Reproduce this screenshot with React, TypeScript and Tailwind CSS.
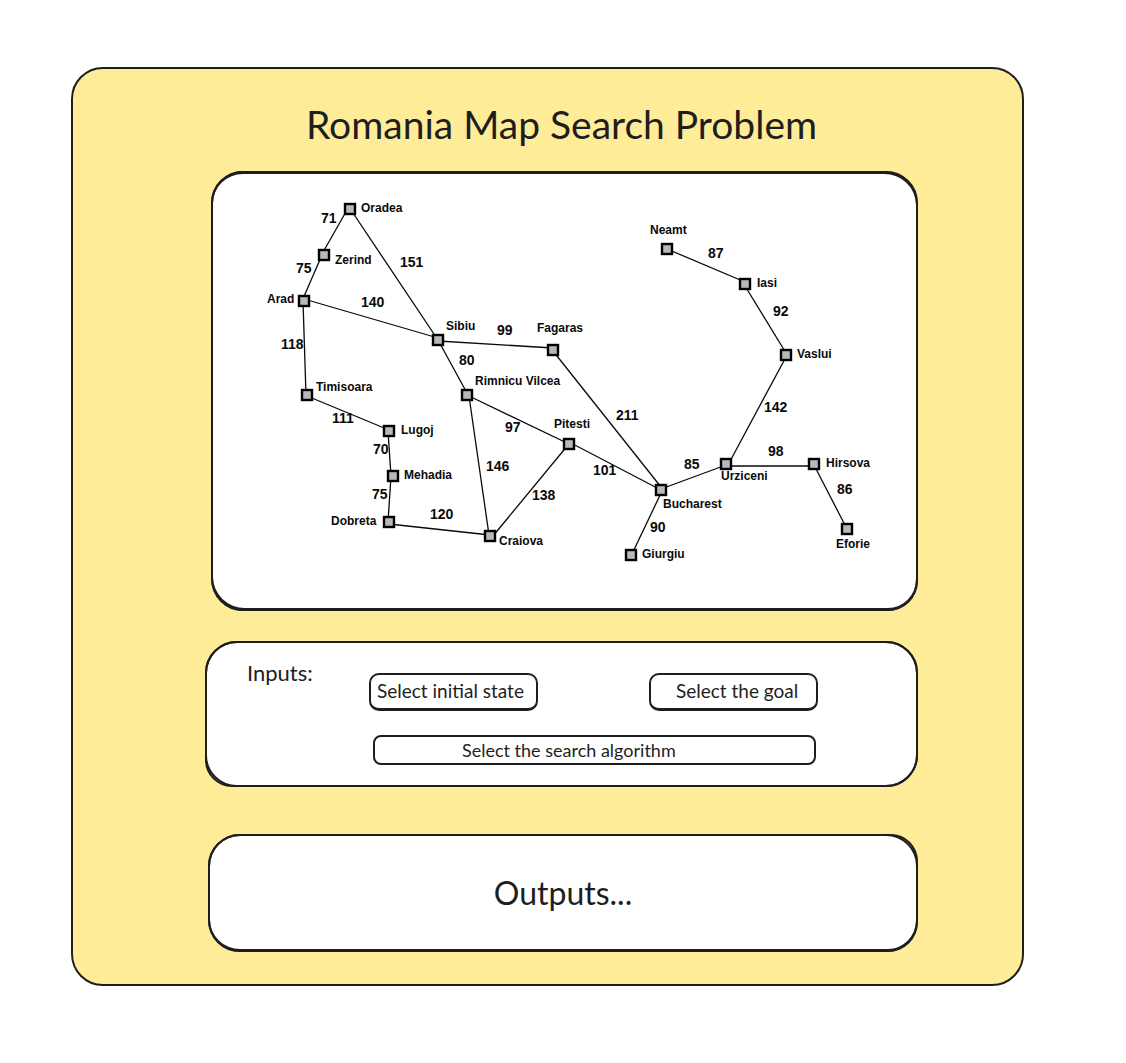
type City = { name: string; x: number; y: number; lx: number; ly: number };
type Road = { from: [number, number]; to: [number, number]; cost: number; lx: number; ly: number };

const cities: City[] = [
  { name: "Oradea", x: 350, y: 209, lx: 361, ly: 212 },
  { name: "Zerind", x: 324, y: 255, lx: 335, ly: 264 },
  { name: "Arad", x: 304, y: 301, lx: 267, ly: 303 },
  { name: "Timisoara", x: 307, y: 395, lx: 316, ly: 391 },
  { name: "Lugoj", x: 389, y: 431, lx: 401, ly: 434 },
  { name: "Mehadia", x: 393, y: 476, lx: 404, ly: 479 },
  { name: "Dobreta", x: 389, y: 522, lx: 331, ly: 525 },
  { name: "Craiova", x: 490, y: 536, lx: 499, ly: 545 },
  { name: "Sibiu", x: 438, y: 340, lx: 446, ly: 330 },
  { name: "Rimnicu Vilcea", x: 467, y: 395, lx: 475, ly: 385 },
  { name: "Fagaras", x: 553, y: 350, lx: 537, ly: 332 },
  { name: "Pitesti", x: 569, y: 444, lx: 554, ly: 428 },
  { name: "Bucharest", x: 661, y: 490, lx: 663, ly: 508 },
  { name: "Giurgiu", x: 631, y: 555, lx: 642, ly: 558 },
  { name: "Urziceni", x: 726, y: 464, lx: 721, ly: 480 },
  { name: "Hirsova", x: 814, y: 464, lx: 826, ly: 467 },
  { name: "Eforie", x: 847, y: 529, lx: 836, ly: 548 },
  { name: "Vaslui", x: 786, y: 355, lx: 797, ly: 358 },
  { name: "Iasi", x: 745, y: 284, lx: 757, ly: 287 },
  { name: "Neamt", x: 667, y: 249, lx: 650, ly: 234 },
];

const roads: Road[] = [
  { from: [347, 210], to: [322, 254], cost: 71, lx: 321, ly: 223 },
  { from: [322, 255], to: [302, 301], cost: 75, lx: 296, ly: 273 },
  { from: [351, 210], to: [438, 340], cost: 151, lx: 400, ly: 267 },
  { from: [304, 299], to: [438, 338], cost: 140, lx: 361, ly: 307 },
  { from: [303, 301], to: [306, 395], cost: 118, lx: 281, ly: 349 },
  { from: [307, 396], to: [389, 430], cost: 111, lx: 332, ly: 423 },
  { from: [388, 431], to: [391, 476], cost: 70, lx: 373, ly: 454 },
  { from: [391, 476], to: [388, 522], cost: 75, lx: 372, ly: 499 },
  { from: [389, 524], to: [490, 535], cost: 120, lx: 430, ly: 519 },
  { from: [438, 341], to: [553, 348], cost: 99, lx: 497, ly: 335 },
  { from: [438, 340], to: [467, 393], cost: 80, lx: 459, ly: 365 },
  { from: [469, 396], to: [569, 444], cost: 97, lx: 505, ly: 432 },
  { from: [469, 396], to: [489, 535], cost: 146, lx: 486, ly: 471 },
  { from: [568, 445], to: [493, 536], cost: 138, lx: 532, ly: 500 },
  { from: [569, 442], to: [661, 490], cost: 101, lx: 593, ly: 475 },
  { from: [553, 351], to: [661, 487], cost: 211, lx: 616, ly: 420 },
  { from: [661, 489], to: [726, 465], cost: 85, lx: 684, ly: 469 },
  { from: [662, 491], to: [632, 554], cost: 90, lx: 650, ly: 532 },
  { from: [728, 465], to: [786, 357], cost: 142, lx: 764, ly: 412 },
  { from: [726, 466], to: [814, 466], cost: 98, lx: 768, ly: 456 },
  { from: [815, 467], to: [847, 529], cost: 86, lx: 837, ly: 494 },
  { from: [786, 353], to: [745, 286], cost: 92, lx: 773, ly: 316 },
  { from: [745, 282], to: [667, 249], cost: 87, lx: 708, ly: 258 },
];

const cityNames = cities.map((c) => c.name);

function RomaniaMap() {
  return (
    <svg
      viewBox="213 173 703 436"
      className="block w-full font-['Liberation_Sans',sans-serif] font-bold"
      role="img"
      aria-label="Road map of Romania"
    >
      <g stroke="#0a0a0a" strokeWidth="1.3">
        {roads.map((r) => (
          <line key={`${r.lx}-${r.ly}`} x1={r.from[0]} y1={r.from[1]} x2={r.to[0]} y2={r.to[1]} />
        ))}
      </g>
      <g fill="#0a0a0a" fontSize="14">
        {roads.map((r) => (
          <text key={`${r.lx}-${r.ly}`} x={r.lx} y={r.ly}>
            {r.cost}
          </text>
        ))}
      </g>
      <g fill="#b8b8b8" stroke="#000" strokeWidth="2.4">
        {cities.map((c) => (
          <rect key={c.name} x={c.x - 5} y={c.y - 5} width="10" height="10" />
        ))}
      </g>
      <g fill="#0a0a0a" fontSize="12">
        {cities.map((c) => (
          <text key={c.name} x={c.lx} y={c.ly}>
            {c.name}
          </text>
        ))}
      </g>
    </svg>
  );
}

function Choice({ label, options, className }: { label: string; options: string[]; className: string }) {
  return (
    <select
      aria-label={label}
      defaultValue=""
      className={`cursor-pointer appearance-none border-2 border-[#1e1e1e] bg-white text-[#1e1e1e] ${className}`}
    >
      <option value="">{label}</option>
      {options.map((o) => (
        <option key={o}>{o}</option>
      ))}
    </select>
  );
}

export default function App() {
  return (
    <div className="min-h-screen bg-white pt-[67px] pr-[102px] pb-19 pl-[71px] font-[Excalifont,Virgil,Lato,sans-serif] text-[#1e1e1e]">
      <main className="rounded-[32px] border-2 border-[#1e1e1e] bg-[#ffec99] pr-26 pb-8 pl-33">
        <h1 className="flex h-[102px] items-center justify-center pt-2 text-[39px] leading-none">
          Romania Map Search Problem
        </h1>

        <section className="relative ml-1.5 rounded-[32px] border-2 border-[#1e1e1e] bg-white after:pointer-events-none after:absolute after:-inset-0.5 after:rounded-[32px_34px_30px_34px] after:border-x-2 after:border-y-3 after:border-[#1e1e1e]">
          <RomaniaMap />
        </section>

        <section className="relative mt-[30px] flex min-h-[146px] rounded-[32px] border-2 border-[#1e1e1e] bg-white pt-[30px] pr-[98px] pl-10 after:pointer-events-none after:absolute after:-inset-0.5 after:rounded-[32px_32px_32px_27px] after:border-2 after:border-[#1e1e1e]">
          <h2 className="-mt-4 w-[122px] shrink-0 text-[22px] leading-8">Inputs:</h2>
          <div className="flex-1">
            <div className="flex justify-between gap-6">
              <Choice
                label="Select initial state"
                options={cityNames}
                className="h-[38px] w-[169px] rounded-[10px] border-b-3 pl-1.5 text-[19px]"
              />
              <Choice
                label="Select the goal"
                options={cityNames}
                className="h-[38px] w-[169px] rounded-[10px] border-b-3 pl-[25px] text-[19px]"
              />
            </div>
            <div className="mt-6 flex pr-0.5 pl-1">
              <Choice
                label="Select the search algorithm"
                options={["Breadth-first", "Depth-first", "Uniform cost", "Greedy", "A*"]}
                className="h-[30px] flex-1 rounded-lg pl-[87px] text-lg leading-5"
              />
            </div>
          </div>
        </section>

        <section className="relative mt-[47px] ml-[3px] flex min-h-[118px] items-center justify-center rounded-[32px] border-2 border-[#1e1e1e] bg-white after:pointer-events-none after:absolute after:-inset-0.5 after:rounded-[32px_27px_30px_32px] after:border-2 after:border-b-3 after:border-[#1e1e1e]">
          <p className="text-[32px] leading-10">Outputs...</p>
        </section>
      </main>
    </div>
  );
}
